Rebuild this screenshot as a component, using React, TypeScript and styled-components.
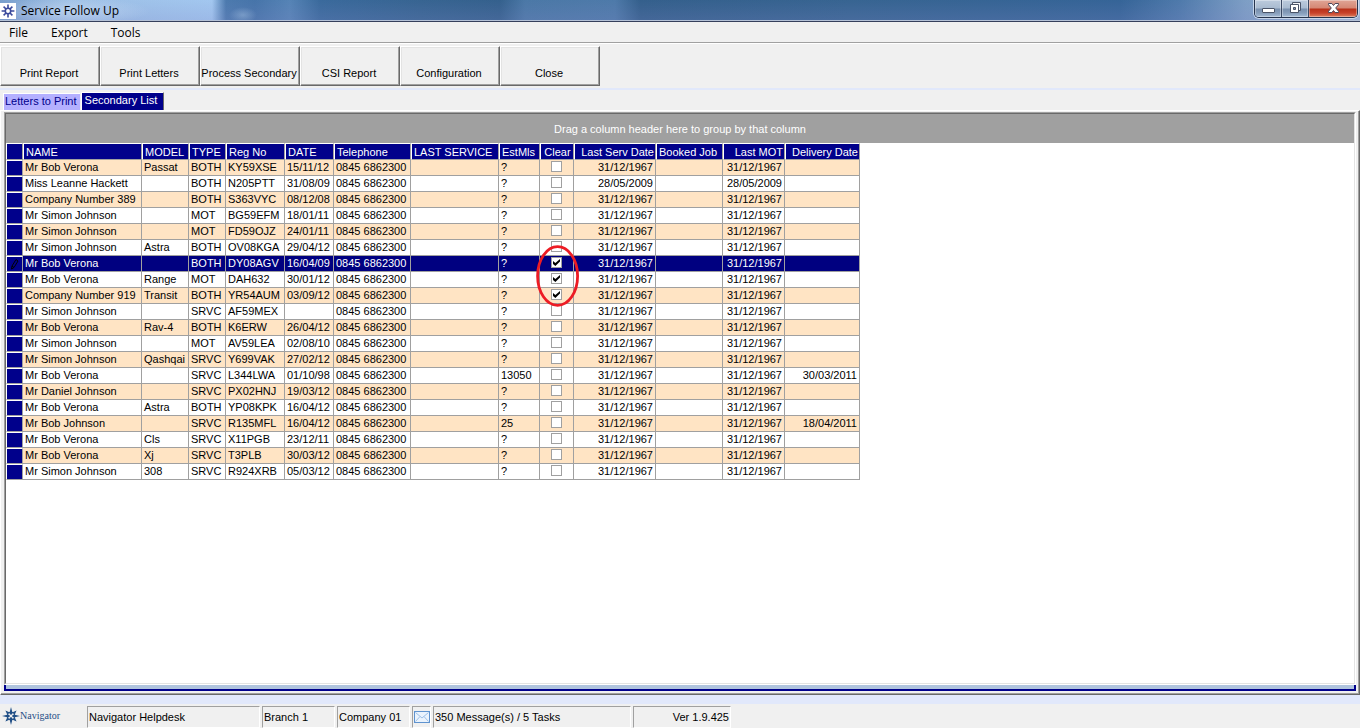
import React from "react";
import styled, { createGlobalStyle, css } from "styled-components";

const NAVY = "#00008b";
const FACE = "#f0f0f0";
const SHADOW = "#a0a0a0";
const DARK = "#696969";
const LIGHT = "#e3e3e3";
const LAVENDER = "#e1e8fb";

const GlobalStyle = createGlobalStyle`
  *, *::before, *::after { box-sizing: border-box; }
  html, body { margin: 0; padding: 0; }
  body {
    background: ${FACE};
    color: #000;
    font-family: "Liberation Sans", Arial, sans-serif;
    font-size: 11px;
    line-height: 14px;
  }
  button, input { font: inherit; color: inherit; margin: 0; }
`;

const Window = styled.div`
  display: flex;
  flex-direction: column;
  min-height: 100vh;
  background: ${FACE};
`;

const TitleBar = styled.header`
  display: flex;
  align-items: flex-start;
  height: 22px;
  border-bottom: 1px solid #36405c;
  box-shadow: inset 0 -1px 0 #b4c1d6;
  background:
    radial-gradient(ellipse 14px 8px at 243px 15px, rgba(190, 215, 240, 0.35), transparent),
    radial-gradient(ellipse 80px 14px at 70px 11px, rgba(215, 232, 250, 0.5), transparent),
    linear-gradient(to bottom, rgba(90, 140, 190, 0.05), rgba(125, 135, 200, 0.25)),
    linear-gradient(
      to right,
      #7ba1cd 0,
      #9fc1e6 70px,
      #a6caf2 212px,
      #4b79ad 226px,
      #4573a8 255px,
      #5583b5 290px,
      #38689a 320px,
      #35628f 420px,
      #325e8a 500px,
      #4a77a5 525px,
      #4d79a8 615px,
      #325d89 640px,
      #35628f 850px,
      #336295 1120px,
      #4e79aa 1180px,
      #7f9fc5 1245px,
      #a9c0dc 1360px
    );
`;

const AppIcon = styled.svg`
  width: 16px;
  height: 16px;
  margin-top: 3px;
  background: #fff;
`;

const Title = styled.h1`
  flex: 1;
  margin: 2px 0 0 5px;
  font: 400 12px/18px "Open Sans", "Noto Sans", sans-serif;
`;

const Controls = styled.div`
  display: flex;
  height: 18px;
  margin-right: 2px;
  border: 1px solid #26344d;
  border-top: 0;
  border-radius: 0 0 5px 5px;
  overflow: hidden;
  box-shadow: 0 0 0 1px rgba(225, 235, 248, 0.7);
`;

const ControlButton = styled.button<{ $close?: boolean }>`
  display: flex;
  align-items: flex-start;
  justify-content: center;
  width: ${(p) => (p.$close ? 48 : 27)}px;
  padding: 0;
  border: 0;
  border-right: ${(p) => (p.$close ? "0" : "1px solid #3b4a64")};
  background: ${(p) =>
    p.$close
      ? "linear-gradient(#e0a596 0, #d58774 8px, #b8311a 9px, #c7412a 13px, #dc7f60 17px)"
      : "linear-gradient(#bccbdd 0, #a9bbd0 8px, #7990ae 9px, #869dba 13px, #a6bcd6 17px)"};
  box-shadow: inset 0 0 0 1px rgba(255, 255, 255, 0.35);
`;

const MenuBar = styled.nav`
  display: flex;
  gap: 9px;
  height: 22px;
  padding-left: 2px;
  border-bottom: 1px solid #fff;
  box-shadow: inset 0 -1px 0 ${SHADOW};
`;

const MenuItem = styled.button`
  padding: 0 7px;
  border: 0;
  background: none;
  font: 400 12px/18px "Open Sans", "Noto Sans", sans-serif;
`;

const Toolbar = styled.div`
  display: flex;
  padding: 2px 0;
  border-bottom: 2px solid ${LAVENDER};
`;

const ToolButton = styled.button`
  width: 100px;
  height: 40px;
  padding: 14px 2px 0 0;
  border: 1px solid;
  border-color: #fff ${DARK} ${DARK} #fff;
  background: ${FACE};
  box-shadow: inset -1px -1px 0 ${SHADOW}, inset 1px 1px 0 ${LIGHT};
  white-space: nowrap;
`;

const TabStrip = styled.div`
  display: flex;
  align-items: flex-end;
  gap: 1px;
  height: 20px;
  padding-left: 3px;
`;

const Tab = styled.button<{ $active?: boolean }>`
  height: ${(p) => (p.$active ? 18 : 17)}px;
  padding: 0 3px 4px 1px;
  border: 1px solid #fff;
  border-width: 1px 0 0 1px;
  background: #b4b0ff;
  color: ${NAVY};
  ${(p) =>
    p.$active &&
    css`
      padding: 0 6px 3px 3px;
      border-right: 1px solid ${DARK};
      background: ${NAVY};
      color: #fff;
    `}
`;

const TabPage = styled.main`
  flex: 1;
  display: flex;
  flex-direction: column;
  padding: 1px 2px 2px 3px;
  border: 1px solid;
  border-color: #fff ${DARK} ${DARK} #fff;
  box-shadow: inset -1px -1px 0 ${SHADOW};
`;

const Grid = styled.section`
  flex: 1;
  display: flex;
  margin-right: 1px;
  border: 1px solid;
  border-color: ${SHADOW} #fff #fff ${SHADOW};
  background: #fff;
`;

const GridInner = styled.div`
  flex: 1;
  border: 1px solid;
  border-color: ${DARK} ${LIGHT} ${LIGHT} ${DARK};
`;

const GroupBar = styled.div`
  height: 29px;
  background: ${SHADOW};
  color: #fff;
  line-height: 30px;
  text-align: center;
`;

const Splitter = styled.div`
  height: 6px;
  margin: 0 1px 1px 0;
  border: 2px solid ${NAVY};
  border-top: 0;
  background: #b0c4de;
`;

const TableArea = styled.div`
  position: relative;
  display: flex;
`;

const Table = styled.table`
  width: 854px;
  table-layout: fixed;
  border-spacing: 0;
`;

type Align = "left" | "right" | "center";

const HeadCell = styled.th<{ $align?: Align }>`
  height: 17px;
  padding: 0 1px 0 2px;
  border: 1px solid;
  border-color: #fff ${SHADOW} ${SHADOW} #fff;
  background: ${NAVY};
  color: #fff;
  font-weight: 400;
  text-align: ${(p) => p.$align ?? "left"};
  white-space: nowrap;
`;

const Row = styled.tr<{ $selected: boolean }>`
  background: #fff;
  &:nth-child(odd) {
    background: #ffe4c4;
  }
  ${(p) =>
    p.$selected &&
    css`
      &&& {
        background: #000080;
        color: #fff;
      }
    `}
`;

const Cell = styled.td<{ $align?: Align }>`
  height: 16px;
  padding: 0 2px;
  border: 1px solid ${SHADOW};
  border-width: 0 1px 1px 0;
  line-height: 14px;
  text-align: ${(p) => p.$align ?? "left"};
  vertical-align: top;
  white-space: nowrap;
`;

const RowSelector = styled.td`
  height: 16px;
  padding: 0;
  border: 1px solid;
  border-color: #fff ${SHADOW} ${SHADOW} #fff;
  background: ${NAVY};
`;

const Pencil = styled.svg`
  display: block;
  width: 10px;
  height: 12px;
  margin: 0 auto;
`;

const Tick = styled.input`
  display: block;
  appearance: none;
  width: 11px;
  height: 11px;
  margin: 1px auto 0;
  border: 1px solid ${SHADOW};
  background: #fff;
  &:checked::before {
    content: "";
    display: block;
    width: 7px;
    height: 7px;
    margin: 1px;
    background: #000;
    clip-path: polygon(0 28%, 34% 58%, 100% 0, 100% 36%, 34% 100%, 0 70%);
  }
`;

const Annotation = styled.svg`
  position: absolute;
  left: 529px;
  top: 101px;
  width: 46px;
  height: 64px;
  pointer-events: none;
`;

const StatusBar = styled.footer`
  display: flex;
  gap: 2px;
  height: 33px;
  padding-top: 2px;
  border-top: 9px solid ${LAVENDER};
`;

const Brand = styled.div`
  display: flex;
  align-items: center;
  width: 85px;
  height: 19px;
  padding-left: 2px;
  color: #1f4e86;
  font: 400 10px/12px "Liberation Serif", serif;
  svg {
    width: 18px;
    height: 18px;
  }
`;

const StatusCell = styled.div<{ $w: number; $right?: boolean }>`
  width: ${(p) => p.$w}px;
  height: 22px;
  padding: 0 1px;
  border: 1px solid;
  border-color: ${SHADOW} #fff #fff ${SHADOW};
  line-height: 21px;
  text-align: ${(p) => (p.$right ? "right" : "left")};
  white-space: nowrap;
  svg {
    display: block;
    margin-top: 4px;
  }
`;

const PHONE = "0845 6862300";
const DAY = "31/12/1967";

interface Entry {
  name: string;
  model?: string;
  type: string;
  reg: string;
  date?: string;
  miles?: string;
  lastServ?: string;
  delivery?: string;
  clear?: boolean;
  selected?: boolean;
}

const ENTRIES: Entry[] = [
  { name: "Mr Bob Verona", model: "Passat", type: "BOTH", reg: "KY59XSE", date: "15/11/12" },
  { name: "Miss Leanne Hackett", type: "BOTH", reg: "N205PTT", date: "31/08/09", lastServ: "28/05/2009" },
  { name: "Company Number 389", type: "BOTH", reg: "S363VYC", date: "08/12/08" },
  { name: "Mr Simon Johnson", type: "MOT", reg: "BG59EFM", date: "18/01/11" },
  { name: "Mr Simon Johnson", type: "MOT", reg: "FD59OJZ", date: "24/01/11" },
  { name: "Mr Simon Johnson", model: "Astra", type: "BOTH", reg: "OV08KGA", date: "29/04/12" },
  { name: "Mr Bob Verona", type: "BOTH", reg: "DY08AGV", date: "16/04/09", clear: true, selected: true },
  { name: "Mr Bob Verona", model: "Range", type: "MOT", reg: "DAH632", date: "30/01/12", clear: true },
  { name: "Company Number 919", model: "Transit", type: "BOTH", reg: "YR54AUM", date: "03/09/12", clear: true },
  { name: "Mr Simon Johnson", type: "SRVC", reg: "AF59MEX" },
  { name: "Mr Bob Verona", model: "Rav-4", type: "BOTH", reg: "K6ERW", date: "26/04/12" },
  { name: "Mr Simon Johnson", type: "MOT", reg: "AV59LEA", date: "02/08/10" },
  { name: "Mr Simon Johnson", model: "Qashqai", type: "SRVC", reg: "Y699VAK", date: "27/02/12" },
  { name: "Mr Bob Verona", type: "SRVC", reg: "L344LWA", date: "01/10/98", miles: "13050", delivery: "30/03/2011" },
  { name: "Mr Daniel Johnson", type: "SRVC", reg: "PX02HNJ", date: "19/03/12" },
  { name: "Mr Bob Verona", model: "Astra", type: "BOTH", reg: "YP08KPK", date: "16/04/12" },
  { name: "Mr Bob Johnson", type: "SRVC", reg: "R135MFL", date: "16/04/12", miles: "25", delivery: "18/04/2011" },
  { name: "Mr Bob Verona", model: "Cls", type: "SRVC", reg: "X11PGB", date: "23/12/11" },
  { name: "Mr Bob Verona", model: "Xj", type: "SRVC", reg: "T3PLB", date: "30/03/12" },
  { name: "Mr Simon Johnson", model: "308", type: "SRVC", reg: "R924XRB", date: "05/03/12" },
];

const COLUMNS: { label: string; width: number; align?: Align }[] = [
  { label: "NAME", width: 119 },
  { label: "MODEL", width: 47 },
  { label: "TYPE", width: 37 },
  { label: "Reg No", width: 59 },
  { label: "DATE", width: 49 },
  { label: "Telephone", width: 77 },
  { label: "LAST SERVICE", width: 88 },
  { label: "EstMls", width: 41 },
  { label: "Clear", width: 34, align: "center" },
  { label: "Last Serv Date", width: 82, align: "right" },
  { label: "Booked Job", width: 67 },
  { label: "Last MOT", width: 62, align: "right" },
  { label: "Delivery Date", width: 75, align: "right" },
];

const TOOLS = ["Print Report", "Print Letters", "Process Secondary", "CSI Report", "Configuration", "Close"];

function Compass({ color, hub }: { color: string; hub: string }) {
  return (
    <g fill={color}>
      <path d="M9 0l1.6 6.2L9 9 7.4 6.2zM9 18l-1.6-6.2L9 9l1.6 2.8zM0 9l6.2-1.6L9 9l-2.8 1.6zM18 9l-6.2 1.6L9 9l2.8-1.6z" />
      <path d="M3.4 3.4l4 1.8-2.2 2.2zM14.6 3.4l-1.8 4-2.2-2.2zM3.4 14.6l1.8-4 2.2 2.2zM14.6 14.6l-4-1.8 2.2-2.2z" />
      <circle cx="9" cy="9" r="3.8" fill="none" stroke={color} strokeWidth="1.1" />
      <circle cx="9" cy="9" r="1.4" fill={hub} />
    </g>
  );
}

export default function App() {
  return (
    <Window>
      <GlobalStyle />
      <TitleBar>
        <AppIcon viewBox="-1 -1 20 20" aria-hidden="true">
          <g stroke="#3b4a9c" strokeWidth="2" fill="none">
            <path d="M9 1v5M9 12v5M1 9h5M12 9h5M3.5 3.5l3 3M14.5 3.5l-3 3M3.5 14.5l3-3M14.5 14.5l-3-3" />
            <circle cx="9" cy="9" r="3.4" />
          </g>
        </AppIcon>
        <Title>Service Follow Up</Title>
        <Controls>
          <ControlButton aria-label="Minimize">
            <svg width="13" height="16" aria-hidden="true">
              <rect x="0.5" y="8.5" width="12" height="4" rx="0.5" fill="#fff" stroke="#4a5468" />
            </svg>
          </ControlButton>
          <ControlButton aria-label="Restore">
            <svg width="13" height="16" aria-hidden="true">
              <path d="M3.5 2.5h8v8h-8z" fill="#f4f6f9" stroke="#4a5468" />
              <path d="M1.5 4.5h8v8h-8z" fill="#fff" stroke="#4a5468" />
              <path d="M4.5 7.5h2v2h-2z" fill="#8296b2" stroke="#4a5468" />
            </svg>
          </ControlButton>
          <ControlButton $close aria-label="Close window">
            <svg width="13" height="16" aria-hidden="true">
              <path
                d="M1.5 3.5h3.4l1.6 2 1.6-2h3.4v1.2L8.7 8l2.8 3.3v1.2H8.1l-1.6-2-1.6 2H1.5v-1.2L4.3 8 1.5 4.7z"
                fill="#fff"
                stroke="#4c4658"
              />
            </svg>
          </ControlButton>
        </Controls>
      </TitleBar>

      <MenuBar aria-label="Main menu">
        <MenuItem>File</MenuItem>
        <MenuItem>Export</MenuItem>
        <MenuItem>Tools</MenuItem>
      </MenuBar>

      <Toolbar>
        {TOOLS.map((label) => (
          <ToolButton key={label}>{label}</ToolButton>
        ))}
      </Toolbar>

      <TabStrip role="tablist">
        <Tab role="tab" aria-selected="false">Letters to Print</Tab>
        <Tab role="tab" aria-selected="true" $active>Secondary List</Tab>
      </TabStrip>

      <TabPage>
        <Grid>
          <GridInner>
            <GroupBar>Drag a column header here to group by that column</GroupBar>
            <TableArea>
              <Table>
                <colgroup>
                  <col width={17} />
                  {COLUMNS.map((c) => (
                    <col key={c.label} width={c.width} />
                  ))}
                </colgroup>
                <thead>
                  <tr>
                    <HeadCell aria-label="Row" />
                    {COLUMNS.map((c) => (
                      <HeadCell key={c.label} scope="col" $align={c.align}>
                        {c.label}
                      </HeadCell>
                    ))}
                  </tr>
                </thead>
                <tbody>
                  {ENTRIES.map((e) => (
                    <Row key={e.reg} $selected={!!e.selected}>
                      <RowSelector>
                        {e.selected && (
                          <Pencil viewBox="0 0 10 12" aria-label="Editing">
                            <path d="M6 1.5l2 1.5-4 6.5-2.5 1.5.5-3zM2 8l2 1.5" fill="none" stroke="#000" />
                          </Pencil>
                        )}
                      </RowSelector>
                      <Cell>{e.name}</Cell>
                      <Cell>{e.model}</Cell>
                      <Cell>{e.type}</Cell>
                      <Cell>{e.reg}</Cell>
                      <Cell>{e.date}</Cell>
                      <Cell>{PHONE}</Cell>
                      <Cell />
                      <Cell>{e.miles ?? "?"}</Cell>
                      <Cell>
                        <Tick type="checkbox" defaultChecked={e.clear} aria-label={`Clear ${e.reg}`} />
                      </Cell>
                      <Cell $align="right">{e.lastServ ?? DAY}</Cell>
                      <Cell />
                      <Cell $align="right">{e.lastServ ?? DAY}</Cell>
                      <Cell $align="right">{e.delivery}</Cell>
                    </Row>
                  ))}
                </tbody>
              </Table>
              <Annotation viewBox="0 0 46 64" aria-hidden="true">
                <ellipse cx="22.6" cy="32" rx="20" ry="29.3" fill="none" stroke="#ed1c24" strokeWidth="2.8" />
              </Annotation>
            </TableArea>
          </GridInner>
        </Grid>
        <Splitter />
      </TabPage>

      <StatusBar>
        <Brand>
          <svg viewBox="0 0 18 18" aria-hidden="true">
            <Compass color="#1f4e86" hub="#f0f0f0" />
          </svg>
          <span>Navigator</span>
        </Brand>
        <StatusCell $w={173}>Navigator Helpdesk</StatusCell>
        <StatusCell $w={73}>Branch 1</StatusCell>
        <StatusCell $w={73}>Company 01</StatusCell>
        <StatusCell $w={19}>
          <svg width="16" height="12" role="img" aria-label="Mail">
            <rect x="0.5" y="0.5" width="15" height="11" fill="#eaf3fd" stroke="#5f93cf" />
            <path d="M1.5 1.5L8 7l6.5-5.5M1.5 10.5l4.5-5M14.5 10.5l-4.5-5" fill="none" stroke="#9dc0e8" />
          </svg>
        </StatusCell>
        <StatusCell $w={198}>350 Message(s) / 5 Tasks</StatusCell>
        <StatusCell $w={98} $right>Ver 1.9.425</StatusCell>
      </StatusBar>
    </Window>
  );
}
